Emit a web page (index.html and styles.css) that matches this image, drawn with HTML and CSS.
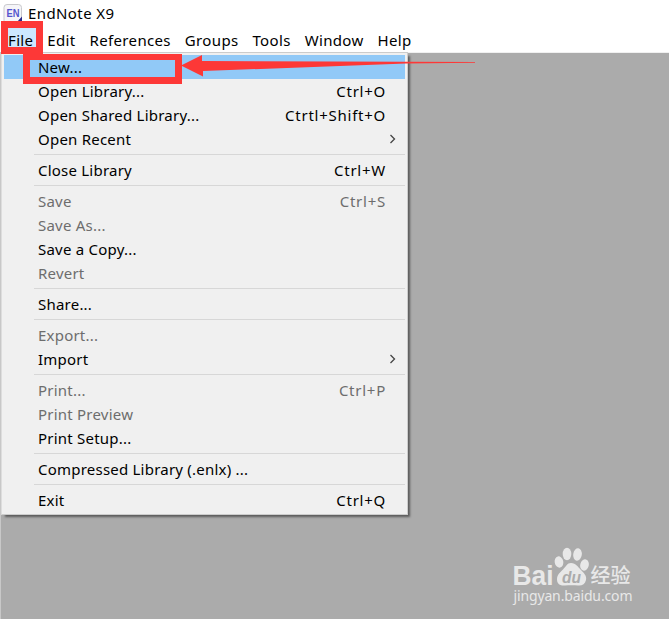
FILE: index.html
```
<!DOCTYPE html>
<html lang="en">
    <head>
        <title>EndNote X9</title>
        <meta charset="utf-8">
        <meta name="viewport" content="width=device-width, initial-scale=1">
        <link rel="stylesheet" href="styles.css">
    </head>
    <body>
        <header class="title-bar">
            <svg class="app-icon" width="20" height="20" viewBox="0 0 20 20">
                <rect x="1" y="0.500" width="17.500" height="19" rx="3" fill="#f5f5f8" stroke="#c9c9cd"/>
                <path d="M13.500 18.500l5.500-6v4q0 2-2 2z" fill="#29298a"/>
                <text class="app-icon-text" x="3.500" y="12.500" textLength="13" lengthAdjust="spacingAndGlyphs">EN</text>
            </svg>
            <span class="app-name">EndNote X9</span>
        </header>
        <nav class="menu-bar">
            <span class="menu-name open">File</span>
            <span class="menu-name">Edit</span>
            <span class="menu-name">References</span>
            <span class="menu-name">Groups</span>
            <span class="menu-name">Tools</span>
            <span class="menu-name">Window</span>
            <span class="menu-name">Help</span>
        </nav>
        <main class="workspace">
            <div class="menu">
                <div class="item selected"><span>New...</span></div>
                <div class="item"><span>Open Library...</span><span class="shortcut">Ctrl+O</span></div>
                <div class="item"><span>Open Shared Library...</span><span class="shortcut">Ctrtl+Shift+O</span></div>
                <div class="item submenu"><span>Open Recent</span><svg class="chevron" width="6" height="10" viewBox="0 0 6 10"><path d="M.5 1l4 4-4 4"/></svg></div>
                <div class="separator"></div>
                <div class="item"><span>Close Library</span><span class="shortcut">Ctrl+W</span></div>
                <div class="separator"></div>
                <div class="item disabled"><span>Save</span><span class="shortcut">Ctrl+S</span></div>
                <div class="item disabled"><span>Save As...</span></div>
                <div class="item"><span>Save a Copy...</span></div>
                <div class="item disabled"><span>Revert</span></div>
                <div class="separator"></div>
                <div class="item"><span>Share...</span></div>
                <div class="separator"></div>
                <div class="item disabled"><span>Export...</span></div>
                <div class="item submenu"><span>Import</span><svg class="chevron" width="6" height="10" viewBox="0 0 6 10"><path d="M.5 1l4 4-4 4"/></svg></div>
                <div class="separator"></div>
                <div class="item disabled"><span>Print...</span><span class="shortcut">Ctrl+P</span></div>
                <div class="item disabled"><span>Print Preview</span></div>
                <div class="item"><span>Print Setup...</span></div>
                <div class="separator"></div>
                <div class="item"><span>Compressed Library (.enlx) ...</span></div>
                <div class="separator"></div>
                <div class="item"><span>Exit</span><span class="shortcut">Ctrl+Q</span></div>
            </div>
        </main>
        <!-- red marks over the menu -->
        <svg class="marks" width="480" height="90" viewBox="0 0 480 90">
            <path fill-rule="evenodd" d="M1 21h42v33H1zM8 28v19h28V28z"/>
            <path fill-rule="evenodd" d="M23 54h159v30H23zM30 60v17h145V60z"/>
            <path d="M181 65.5L202 55v6l204 .7 69 .3v.7l-69 .9-203 7.4v5.5z"/>
        </svg>
        <svg class="watermark" width="130" height="64" viewBox="510 544 130 64">
            <text class="brand" x="512.500" y="584.500" textLength="41" lengthAdjust="spacingAndGlyphs">Bai</text>
            <ellipse cx="559" cy="562" rx="4.300" ry="5.700" transform="rotate(-12 559 562)"/>
            <ellipse cx="567" cy="554" rx="4.300" ry="6.200"/>
            <ellipse cx="577.500" cy="554.500" rx="4.300" ry="6.200" transform="rotate(8 577.500 554.500)"/>
            <ellipse cx="584.500" cy="565" rx="4.300" ry="5.700" transform="rotate(15 584.500 565)"/>
            <path d="M571 563c5 0 7 4 10 7s6 6 5 10-4 6-8 5.500-9-.5-13 0-8-1-8-6 3-7 6-10 4-6.500 8-6.500z"/>
            <text class="du" x="562" y="583" textLength="19" lengthAdjust="spacingAndGlyphs">du</text>
            <text class="cn" x="590.500" y="583" textLength="40" lengthAdjust="spacingAndGlyphs">经验</text>
            <text class="address" x="513.500" y="601" textLength="119">jingyan.baidu.com</text>
        </svg>
    </body>
</html>
```
FILE: styles.css
```
body {
  margin: 0;
  width: 669px;
  height: 619px;
  overflow: hidden;
  position: relative;
  display: flex;
  flex-direction: column;
  background: #fff;
  color: #000;
  font-family: "Noto Sans", "Open Sans", sans-serif;
  font-size: 15px;
}

.title-bar {
  display: flex;
  align-items: center;
  height: 28px;
  padding-left: 3px;
  gap: 5px;
  box-sizing: border-box;
}

.app-icon-text {
  font: bold 10px "Liberation Sans", sans-serif;
  fill: #5555ce;
}

.app-name {
  letter-spacing: 0.4px;
  line-height: 24px;
  padding-bottom: 2px;
}

.menu-bar {
  display: flex;
  height: 24px;
  line-height: 25px;
  padding-left: 1px;
  letter-spacing: 0.34px;
}

.menu-name {
  padding: 0 7px;
}

.menu-name.open {
  background: #cce8ff;
}

.workspace {
  flex: 1;
  background: linear-gradient(#f0f0f0 1px, #ababab 1px);
  border-left: 1px solid #c8c8c8;
}

.menu {
  width: 407px;
  box-sizing: border-box;
  padding: 2px;
  background: #f0f0f0;
  border: 1px solid #ccc;
  border-left-color: #ddd;
  box-shadow: 3px 3px 2px -1px #5c5c5c;
}

.item {
  display: flex;
  justify-content: space-between;
  height: 24px;
  line-height: 25px;
  padding: 0 19px 0 34px;
  white-space: pre;
  letter-spacing: 0.22px;
}

.item.submenu {
  align-items: center;
  padding-right: 9px;
}

.item.selected {
  background: #91c9f7;
}

.item.disabled {
  color: #6d6d6d;
}

.shortcut {
  letter-spacing: 0.75px;
}

.separator {
  height: 1px;
  margin: 3px 0 3px 30px;
  background: #d7d7d7;
}

.chevron path {
  fill: none;
  stroke: #444;
  stroke-width: 1.3;
}

.marks {
  position: absolute;
  left: 0;
  top: 0;
  fill: #fd3837;
}

.watermark {
  position: absolute;
  left: 510px;
  top: 544px;
  fill: #e8e8e8;
}

.brand {
  font: bold 27px "Liberation Sans", sans-serif;
}

.du {
  font: bold italic 17px "Liberation Sans", sans-serif;
  fill: #ababab;
}

.cn {
  font: 500 20px "Noto Sans CJK SC", sans-serif;
}

.address {
  font: 14px "Noto Sans", sans-serif;
}
```
